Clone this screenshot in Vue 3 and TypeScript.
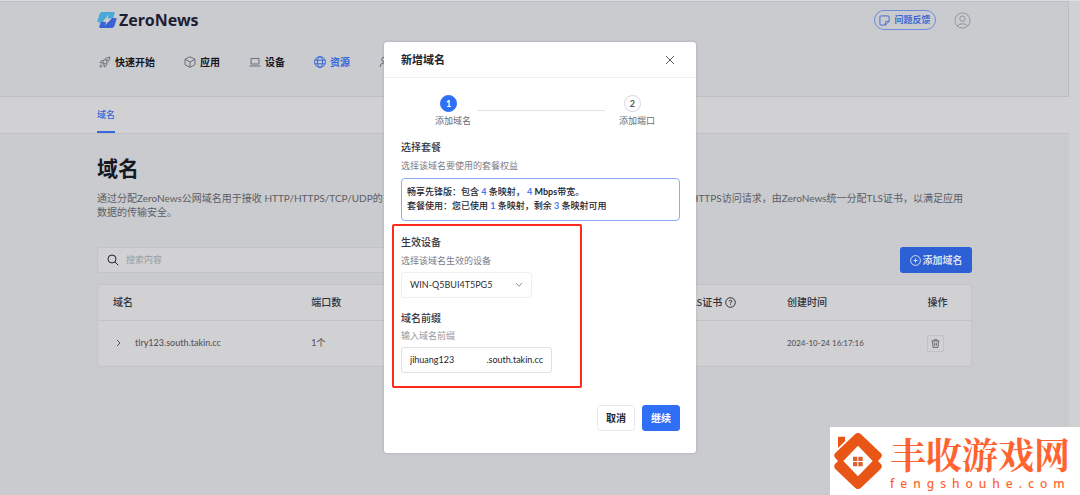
<script setup lang="ts">
import { ref } from 'vue'

interface DomainRow {
  name: string
  ports: string
  created: string
}

const keyword = ref('')
const device = ref('WIN-Q5BUI4T5PG5')
const prefix = ref('jihuang123')
const rows: DomainRow[] = [
  { name: 'tlry123.south.takin.cc', ports: '1个', created: '2024-10-24 16:17:16' },
]
</script>

<template>
  <div class="app">
    <div class="page">
      <header class="top">
        <div class="brand-row">
          <a class="brand" href="#">
            <svg width="20" height="16" viewBox="0 0 56 46" aria-hidden="true">
              <path fill="#4aa9d8" d="M13 0H46Q52 0 50 5L45 20H30L16 30H4Q-1 29 1 24L7 5Q9 0 13 0Z" />
              <path fill="#3a62d2" d="M43 17H52Q57 17 55 22L49 41Q47 46 42 46H9Q4 46 6 41L10 29H30Z" />
              <path fill="#cacbcf" d="M33 7L16 27H26L22 39L41 19H30Z" />
            </svg>
            <span>ZeroNews</span>
          </a>
          <div class="account">
            <button class="feedback" type="button">
              <svg width="11" height="11" viewBox="0 0 12 12" aria-hidden="true">
                <path d="M7 11H2Q1 11 1 10V2Q1 1 2 1H10Q11 1 11 2V7L7 11V8Q7 7 8 7H11" />
              </svg>
              问题反馈
            </button>
            <button class="avatar" type="button" aria-label="账户">
              <svg width="17" height="17" viewBox="0 0 17 17" aria-hidden="true">
                <circle cx="8.5" cy="8.5" r="7.6" />
                <circle cx="8.5" cy="6.7" r="2.7" />
                <path d="M3.4 14Q4 11.8 8.5 11.8T13.6 14" />
              </svg>
            </button>
          </div>
        </div>
        <nav class="nav">
          <a href="#">
            <svg width="12" height="12" viewBox="0 0 12 12" aria-hidden="true">
              <path d="M4 8Q3.8 2.4 11 1Q9.8 8 4 8ZM4.6 4.3L2.6 4.5L1 6.6L3.8 6.9M7.9 7.2L7.6 9.4L5.4 11L5 8.2M2.6 8.4Q1 9 1 11Q3 11 3.7 9.5" />
              <circle cx="7.6" cy="4.4" r="0.8" />
            </svg>
            快速开始
          </a>
          <a href="#">
            <svg width="12" height="12" viewBox="0 0 12 12" aria-hidden="true">
              <path d="M6 .7L11 3.3V8.7L6 11.3L1 8.7V3.3ZM1 3.3L6 6L11 3.3M6 6V11.3" />
            </svg>
            应用
          </a>
          <a href="#">
            <svg width="12" height="12" viewBox="0 0 12 12" aria-hidden="true">
              <path d="M2 8V2.5H10V8ZM.5 10H11.5" />
            </svg>
            设备
          </a>
          <a class="current" href="#">
            <svg width="12" height="12" viewBox="0 0 12 12" aria-hidden="true">
              <circle cx="6" cy="6" r="5.4" />
              <ellipse cx="6" cy="6" rx="2.5" ry="5.4" />
              <path d="M.9 4.2H11.1M.9 7.8H11.1" />
            </svg>
            资源
          </a>
          <a href="#" aria-label="用户">
            <svg width="12" height="12" viewBox="0 0 12 12" aria-hidden="true">
              <circle cx="5" cy="3.5" r="2.3" />
              <path d="M1 11Q1 7 5 7T9 11" />
            </svg>
          </a>
        </nav>
      </header>

      <div class="tabs">
        <a class="tab" href="#">域名</a>
      </div>

      <main class="content">
        <h1>域名</h1>
        <p class="intro">
          <span class="intro-line">
            <span>通过分配ZeroNews公网域名用于接收 HTTP/HTTPS/TCP/UDP的</span>
            <span>HTTPS访问请求，由ZeroNews统一分配TLS证书，以满足应用</span>
          </span>
          数据的传输安全。
        </p>

        <div class="toolbar">
          <label class="search">
            <svg width="12" height="12" viewBox="0 0 12 12" aria-hidden="true">
              <circle cx="5" cy="5" r="4" />
              <path d="M8 8L11.2 11.2" />
            </svg>
            <input v-model="keyword" type="text" placeholder="搜索内容" aria-label="搜索内容" />
          </label>
          <button class="add" type="button">
            <svg width="11" height="11" viewBox="0 0 11 11" aria-hidden="true">
              <circle cx="5.5" cy="5.5" r="4.9" />
              <path d="M5.5 3.5V7.5M3.5 5.5H7.5" />
            </svg>
            添加域名
          </button>
        </div>

        <div class="card">
          <table>
            <thead>
              <tr>
                <th class="c-name">域名</th>
                <th class="c-port">端口数</th>
                <th class="c-tls">
                  <span class="with-icon">
                    TLS证书
                    <svg width="11" height="11" viewBox="0 0 11 11" aria-hidden="true">
                      <circle cx="5.5" cy="5.5" r="4.8" />
                      <path d="M4.1 4.5Q4.1 3.2 5.5 3.2T6.9 4.4Q6.9 5.3 5.5 5.7V6.4M5.5 7.3V8.2" />
                    </svg>
                  </span>
                </th>
                <th class="c-time">创建时间</th>
                <th class="c-act">操作</th>
              </tr>
            </thead>
            <tbody>
              <tr v-for="row in rows" :key="row.name">
                <td>
                  <span class="expand">
                    <button class="bare" type="button" aria-label="展开">
                      <svg width="7" height="8" viewBox="0 0 7 8" aria-hidden="true"><path d="M2 1L5 4L2 7" /></svg>
                    </button>
                    {{ row.name }}
                  </span>
                </td>
                <td>{{ row.ports }}</td>
                <td></td>
                <td class="date">{{ row.created }}</td>
                <td>
                  <button class="trash" type="button" aria-label="删除">
                    <svg width="9" height="9" viewBox="0 0 9 9" aria-hidden="true">
                      <path d="M.5 2H8.5M3 2V.7H6V2M1.5 2L2 8.4H7L7.5 2M3.7 3.8V6.8M5.3 3.8V6.8" />
                    </svg>
                  </button>
                </td>
              </tr>
            </tbody>
          </table>
        </div>
      </main>
    </div>

    <section class="dialog" role="dialog" aria-modal="true" aria-labelledby="dialog-title">
      <header class="dialog-head">
        <h2 id="dialog-title">新增域名</h2>
        <button class="bare close" type="button" aria-label="关闭">
          <svg width="10" height="10" viewBox="0 0 10 10" aria-hidden="true"><path d="M1 1L9 9M9 1L1 9" /></svg>
        </button>
      </header>
      <div class="dialog-body">
        <ol class="steps">
          <li class="step active"><b>1</b>添加域名</li>
          <li class="track" aria-hidden="true"></li>
          <li class="step"><b>2</b>添加端口</li>
        </ol>

        <h3>选择套餐</h3>
        <p class="hint">选择该域名要使用的套餐权益</p>
        <div class="plan">
          <p>畅享先锋版：包含 <em>4</em> 条映射， <em>4</em> <strong>Mbps</strong>带宽。</p>
          <p>套餐使用：您已使用 <em>1</em> 条映射，剩余 <em>3</em> 条映射可用</p>
        </div>

        <div class="marked">
          <h3><label for="device">生效设备</label></h3>
          <p class="hint">选择该域名生效的设备</p>
          <div class="select">
            <select id="device" v-model="device">
              <option>WIN-Q5BUI4T5PG5</option>
            </select>
            <svg width="8" height="6" viewBox="0 0 8 6" aria-hidden="true"><path d="M1 1L4 4.3L7 1" /></svg>
          </div>
          <h3 class="second"><label for="prefix">域名前缀</label></h3>
          <p class="hint soft">输入域名前缀</p>
          <div class="prefix">
            <input id="prefix" v-model="prefix" type="text" />
            <span>.south.takin.cc</span>
          </div>
        </div>

        <footer class="actions">
          <button class="cancel" type="button">取消</button>
          <button class="next" type="button">继续</button>
        </footer>
      </div>
    </section>

    <aside class="sponsor">
      <svg width="48" height="56" viewBox="0 0 144 168" aria-hidden="true">
        <path
          fill="#e95514"
          fill-rule="evenodd"
          d="M63 4Q72 -4 81 4L140 60Q147 68 140 75L132 84L140 92Q147 100 140 108L81 164Q72 172 63 164L4 108Q-3 100 4 92L12 84L4 75Q-3 68 4 60ZM72 38L28 84L72 130L116 84Z"
        />
        <path fill="#e95514" d="M12 11H33V25L12 45Z" />
        <path fill="#dc6030" d="M57 71H70V84H57ZM73 71H86V84H73ZM57 87H70V100H57ZM73 87H86V100H73Z" />
      </svg>
      <div class="sponsor-text">
        <strong>丰收游戏网</strong>
        <span>fengshouhe.com</span>
      </div>
    </aside>
  </div>
</template>

<style>
body {
  margin: 0;
  background: #d1d1d3;
}
</style>

<style scoped>
* {
  box-sizing: border-box;
}
.app {
  position: relative;
  min-height: 100vh;
  overflow: hidden;
  background: #d1d1d3;
  border-top: 1px solid #dcdde0;
  font-family: Lato, "Noto Sans CJK SC", sans-serif;
  font-size: 9px;
  line-height: 14px;
  color: #24252f;
}
h1, h2, h3, p, ol {
  margin: 0;
  padding: 0;
}
a {
  color: inherit;
  text-decoration: none;
}
button, input, select {
  font: inherit;
  color: inherit;
  margin: 0;
}
button {
  padding: 0;
  cursor: pointer;
}
svg {
  flex: none;
  fill: none;
  stroke: currentColor;
}
.brand svg, .sponsor svg {
  stroke: none;
}
.page {
  display: flex;
  flex-direction: column;
  min-height: calc(100vh - 1px);
  margin-right: 11px;
  background: #cacbcf;
}
.top {
  height: 96px;
  padding: 8px 97px 0;
  border: solid #bdbec5;
  border-width: 1px 1px 1px 0;
}
.brand-row, .brand, .account, .nav, .nav a, .toolbar, .with-icon, .expand {
  display: flex;
  align-items: center;
}
.brand-row {
  justify-content: space-between;
  height: 20px;
}
.brand {
  gap: 2px;
  color: #1d2033;
  font: 700 16px/20px "Noto Sans", sans-serif;
}
.account {
  gap: 18px;
}
.feedback {
  display: flex;
  align-items: center;
  justify-content: center;
  gap: 4px;
  width: 62px;
  height: 20px;
  border: 1px solid #6d8bdb;
  border-radius: 10px;
  background: none;
  color: #3f66d2;
  font-weight: 700;
}
.avatar {
  display: flex;
  border: 0;
  background: none;
  color: #94959c;
}
.nav {
  gap: 29px;
  height: 20px;
  margin-top: 22px;
  padding-left: 2px;
  font-size: 10px;
  font-weight: 700;
  color: #16171f;
}
.nav a {
  gap: 4px;
}
.nav svg {
  color: #6c6e78;
}
.nav .current, .nav .current svg {
  color: #3566da;
}
.tabs {
  height: 37px;
  padding: 0 97px;
  background: #d1d1d3;
  border-bottom: 1px solid #c0c1c7;
}
.tab {
  display: inline-block;
  height: 36px;
  border-bottom: 2px solid #3566da;
  color: #3566da;
  font-weight: 500;
  line-height: 36px;
}
.content {
  padding: 20px 97px 0;
}
h1 {
  font-size: 21px;
  line-height: 28px;
  color: #161823;
}
.intro {
  margin-top: 9px;
  padding-right: 9px;
  font-size: 10px;
  color: #5c5d64;
}
.intro-line {
  display: flex;
  justify-content: space-between;
  white-space: nowrap;
}
.toolbar {
  justify-content: space-between;
  margin-top: 28px;
}
.search {
  display: flex;
  align-items: center;
  gap: 7px;
  width: 46%;
  height: 26px;
  padding: 0 9px;
  border: 1px solid #c2c3c8;
  border-radius: 3px;
  background: #d1d1d3;
}
.search input {
  flex: 1;
  min-width: 0;
  padding: 0;
  border: 0;
  outline: 0;
  background: none;
}
.search input::placeholder {
  color: #989ba3;
}
.add {
  display: flex;
  align-items: center;
  justify-content: center;
  gap: 2px;
  width: 72px;
  height: 26px;
  border: 0;
  border-radius: 3px;
  background: #2c60d4;
  color: #d8dff0;
  font-size: 10px;
  font-weight: 700;
}
.card {
  margin-top: 11px;
  border: 1px solid #c3c4c9;
  border-radius: 3px;
  background: #d1d1d3;
}
table {
  width: 100%;
  border-collapse: collapse;
  table-layout: fixed;
}
th, td {
  padding: 0 0 0 15px;
  text-align: left;
  white-space: nowrap;
}
th {
  height: 35px;
  border-bottom: 1px solid #c3c4c9;
  font-size: 10px;
  font-weight: 500;
  color: #30313b;
}
td {
  height: 46px;
  color: #54555d;
  font-weight: 500;
}
.date {
  font-size: 8px;
}
.c-name { width: 22.7%; }
.c-port { width: 42.9%; }
.c-tls { width: 11.6%; }
.c-time { width: 16.1%; }
.with-icon {
  gap: 3px;
}
.expand {
  gap: 13px;
  padding-left: 2px;
}
.bare {
  display: flex;
  border: 0;
  background: none;
}
.trash {
  display: flex;
  align-items: center;
  justify-content: center;
  width: 17px;
  height: 17px;
  border: 1px solid #c0c1c6;
  border-radius: 2px;
  background: none;
  color: #6a6b73;
}
.dialog {
  position: absolute;
  top: 41px;
  left: 50%;
  width: 312px;
  transform: translateX(-50%);
  border-radius: 3px;
  background: #fff;
  box-shadow: 0 0 3px rgba(30, 32, 50, 0.2);
}
.dialog-head {
  display: flex;
  align-items: center;
  justify-content: space-between;
  height: 36px;
  padding: 0 21px 0 17px;
  border-bottom: 1px solid #eeeff2;
}
h2 {
  font-size: 11px;
  color: #20222e;
}
.close {
  color: #55565e;
}
.dialog-body {
  padding: 17px 16px 22px 17px;
}
.steps {
  display: flex;
  justify-content: space-between;
  padding: 0 25px 0 34px;
  list-style: none;
  color: #6b6c73;
}
.step {
  display: flex;
  flex-direction: column;
  gap: 2px;
}
.step b {
  width: 17px;
  height: 17px;
  margin-left: 5px;
  border: 1px solid #d5d6dd;
  border-radius: 50%;
  color: #55565e;
  line-height: 15px;
  text-align: center;
}
.active b {
  border-color: #2f6ff5;
  background: #2f6ff5;
  color: #fff;
}
.track {
  flex: 1;
  height: 1px;
  margin: 15px 14px 0 6px;
  background: #e2e3e8;
}
h3 {
  font-size: 10px;
  font-weight: 500;
  line-height: 14px;
  color: #33343e;
}
.steps + h3 {
  margin-top: 12px;
}
.hint {
  margin-top: 5px;
  color: #7b7d88;
}
.hint.soft {
  margin-top: 4px;
  color: #94979f;
}
.plan {
  margin-top: 5px;
  padding: 6px 5px 7px;
  border: 1px solid #8daaf5;
  border-radius: 4px;
  white-space: nowrap;
  font-weight: 500;
  color: #24252f;
}
.plan em {
  font-style: normal;
  font-weight: 700;
  color: #4678f0;
}
.marked {
  width: 190px;
  margin: 3px 0 0 -9px;
  padding: 9px 7px 13px;
  border: 2px solid #ff2a1c;
  border-radius: 2px;
}
.select {
  position: relative;
  width: 131px;
  margin-top: 4px;
}
.select select {
  display: block;
  width: 100%;
  height: 26px;
  padding: 0 24px 0 8px;
  appearance: none;
  border: 1px solid #eeeff2;
  border-radius: 3px;
  background: #fff;
  color: #2d2e37;
}
.select svg {
  position: absolute;
  top: 10px;
  right: 9px;
  color: #8d8f98;
  pointer-events: none;
}
.second {
  margin-top: 13px;
}
.prefix {
  display: flex;
  align-items: center;
  gap: 4px;
  width: 151px;
  height: 26px;
  margin-top: 4px;
  padding: 0 8px;
  border: 1px solid #dfe0e5;
  border-radius: 3px;
}
.prefix input {
  flex: 1;
  min-width: 0;
  padding: 0;
  border: 0;
  outline: 0;
  background: none;
}
.actions {
  display: flex;
  justify-content: flex-end;
  gap: 7px;
  margin-top: 17px;
}
.actions button {
  width: 38px;
  height: 26px;
  border: 1px solid #e8e9ed;
  border-radius: 3px;
  background: #fff;
  font-size: 10px;
  font-weight: 700;
}
.actions .next {
  border-color: #2f6ff5;
  background: #2f6ff5;
  color: #fff;
}
.sponsor {
  position: absolute;
  right: 0;
  bottom: 0;
  display: flex;
  align-items: center;
  gap: 8px;
  width: 250px;
  height: 68px;
  padding: 0 4px;
  background: #fff;
  color: #ff6330;
}
.sponsor-text {
  display: flex;
  flex-direction: column;
  gap: 2px;
}
.sponsor strong {
  font: 700 36px/44px "Noto Serif CJK SC", "Noto Sans CJK SC", serif;
  white-space: nowrap;
}
.sponsor span {
  font: 500 12px/12px "Noto Sans", sans-serif;
  letter-spacing: 6px;
}
</style>
